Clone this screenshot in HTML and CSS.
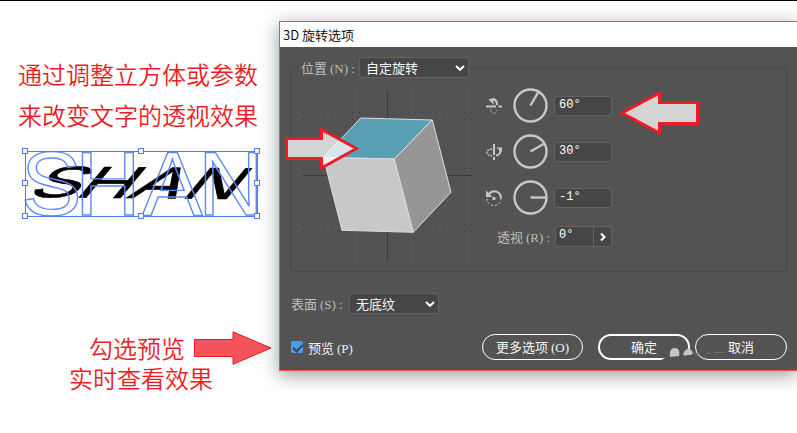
FILE: index.html
```html
<!DOCTYPE html>
<html lang="zh-Hans">

<head>
    <meta charset="utf-8">
    <meta name="viewport" content="width=device-width, initial-scale=1.0">
    <title>3D 旋转选项</title>
    <link rel="stylesheet" href="styles.css">
</head>

<body>
    <div class="page">
        <section class="notes">
            <p class="note">通过调整立方体或参数<br>来改变文字的透视效果</p>

            <svg class="artwork" width="242" height="76" viewBox="0 0 242 76">
                <text class="solid" transform="matrix(1 0.01 -0.5 0.6 0 52)" x="6 53 106 159" y="0">SHAN</text>
                <text class="outline" x="1 55 122 178" y="70" stroke-width="1.4">SHAN</text>
                <rect class="bounds" x="5.5" y="6.5" width="232" height="65" />
                <g class="handles">
                    <rect x="2.5" y="3.5" width="5" height="5" />
                    <rect x="118.5" y="3.5" width="5" height="5" />
                    <rect x="234.5" y="3.5" width="5" height="5" />
                    <rect x="2.5" y="35.5" width="5" height="5" />
                    <rect x="234.5" y="35.5" width="5" height="5" />
                    <rect x="2.5" y="68.5" width="5" height="5" />
                    <rect x="118.5" y="68.5" width="5" height="5" />
                    <rect x="234.5" y="68.5" width="5" height="5" />
                </g>
            </svg>

            <div class="hint">
                <span>勾选预览</span>
                <svg width="78" height="34" viewBox="0 0 78 34">
                    <path class="arrow-red" d="M.5 8.5H39V.8L77 17 39 33.3V25.5H.5Z" />
                </svg>
            </div>
            <div class="hint hint-second">实时查看效果</div>
        </section>

        <form class="dialog">
            <h1 class="title">3D 旋转选项</h1>
            <div class="content">
                <fieldset class="position">
                    <legend>
                        <label for="position">位置 <span class="key">(N) :</span></label>
                        <span class="select select-wide">
                            <select id="position">
                                <option>自定旋转</option>
                            </select>
                            <svg class="chevron" width="10" height="6" viewBox="0 0 10 6"><path d="M1 1 5 4.8 9 1" /></svg>
                        </span>
                    </legend>

                    <div class="stage">
                        <svg width="170" height="170" viewBox="0 0 170 170">
                            <defs>
                                <pattern id="dots" width="7" height="7" patternUnits="userSpaceOnUse">
                                    <rect width="1" height="1" fill="#3d3d3d" />
                                </pattern>
                            </defs>
                            <rect width="170" height="170" fill="url(#dots)" />
                            <path d="M84.5 0V170M0 84.5H170" stroke="#3a3a3a" />
                            <g stroke="#dedede" stroke-linejoin="round">
                                <path d="M57.7 27 129.3 29 91.3 68 20.3 66.5Z" fill="#5aa0b5" />
                                <path d="M20.3 66.5 91.3 68 110.3 141.3 39 139.3Z" fill="#c8c8c8" />
                                <path d="M129.3 29 148 101.3 110.3 141.3 91.3 68Z" fill="#969696" />
                            </g>
                        </svg>
                        <svg class="arrow-cube" width="74" height="44" viewBox="0 0 74 44">
                            <path class="arrow" d="M1.5 11.5H36.5V2.5L71.5 21.5 36.5 41V31.5H1.5Z" />
                        </svg>
                    </div>

                    <div class="controls">
                        <div class="axis">
                            <svg class="icon" width="18" height="18" viewBox="0 0 18 18">
                                <path d="M1 9.5H11M13.5 9.5H17" stroke-width="2" />
                                <path d="M7 3C10 1 12 4 12 8" stroke-width="2" />
                                <path class="fill" d="M3.5 2.5 8.5 1V7.5Z" />
                                <path d="M5.5 12C6 17.5 11 18.5 12.5 12" stroke-dasharray="1 1" />
                            </svg>
                            <svg class="dial" width="35" height="35" viewBox="0 0 35 35" stroke-width="2.4">
                                <circle cx="17.5" cy="17.5" r="16" />
                                <path d="M17.5 17.5 25.3 4" />
                            </svg>
                            <input type="text" class="angle" aria-label="X 轴" value="60°">
                        </div>
                        <div class="axis">
                            <svg class="icon" width="18" height="18" viewBox="0 0 18 18">
                                <path d="M9 1V12M9 14V17" stroke-width="2" />
                                <path d="M11 12.5C15 12 16 9.5 15 6" stroke-width="2" />
                                <path class="fill" d="M11.5 4.5H17V9Z" />
                                <path d="M7 6C0 7 0 12 7 13" stroke-width="1.4" stroke-dasharray="2 1" />
                            </svg>
                            <svg class="dial" width="35" height="35" viewBox="0 0 35 35" stroke-width="2.4">
                                <circle cx="17.5" cy="17.5" r="16" />
                                <path d="M17.5 17.5 31.5 9.5" />
                            </svg>
                            <input type="text" class="angle" aria-label="Y 轴" value="30°">
                        </div>
                        <div class="axis">
                            <svg class="icon" width="18" height="18" viewBox="0 0 18 18">
                                <path d="M3.5 5.5C8-.5 16 2.5 16 9.5" stroke-width="2" />
                                <path class="fill" d="M1 1.5V8H7.5Z" />
                                <path d="M16 9.5C16 19 2 19 2 9.5" stroke-dasharray="2 2" />
                                <circle class="fill" cx="9" cy="9.5" r="1.7" />
                            </svg>
                            <svg class="dial" width="35" height="35" viewBox="0 0 35 35" stroke-width="2.4">
                                <circle cx="17.5" cy="17.5" r="16" />
                                <path d="M17.5 17.5H33.5" />
                            </svg>
                            <input type="text" class="angle" aria-label="Z 轴" value="-1°">
                        </div>
                        <div class="perspective">
                            <label for="perspective">透视 <span class="key">(R) :</span></label>
                            <div class="stepper">
                                <input type="text" class="angle" id="perspective" value="0°">
                                <button type="button" class="step" aria-label="展开">
                                    <svg width="6" height="10" viewBox="0 0 6 10"><path d="M1 1.5 4.5 5 1 8.5" /></svg>
                                </button>
                            </div>
                        </div>
                        <svg class="arrow-angle" width="80" height="44" viewBox="0 0 80 44">
                            <path class="arrow" d="M2 22 39.5 2V11.5H77.5V32.5H39.5V42Z" />
                        </svg>
                    </div>
                </fieldset>

                <div class="surface">
                    <label for="surface">表面 <span class="key">(S) :</span></label>
                    <span class="select">
                        <select id="surface">
                            <option>无底纹</option>
                        </select>
                        <svg class="chevron" width="10" height="6" viewBox="0 0 10 6"><path d="M1 1 5 4.8 9 1" /></svg>
                    </span>
                </div>

                <div class="footer">
                    <input type="checkbox" id="preview" checked>
                    <label for="preview">预览 <span class="key">(P)</span></label>
                    <button type="button" class="btn btn-more">更多选项 <span class="key">(O)</span></button>
                    <button type="submit" class="btn btn-ok">确定</button>
                    <button type="button" class="btn">取消</button>
                    <svg class="smudge" width="70" height="14" viewBox="0 0 70 14">
                        <path d="M2 14 8 11 31 9 27 14Z" fill="#535353" />
                        <path d="M11 11C10 5 12 2 16 2S21 6 20 10Z" fill="#c4c4c4" />
                        <path d="M24 9C26 1 32 1 34 7L32 9Z" fill="#c4c4c4" />
                        <path d="M34 8 40 7M47 7H52M55 7 65 6" stroke="#777" />
                    </svg>
                </div>
            </div>
        </form>
    </div>
</body>

</html>
```
FILE: styles.css
```css
* {
    box-sizing: border-box;
}

body {
    margin: 0;
    border-top: 1px solid #000;
    background: #fff;
    font-family: "Noto Sans CJK SC", sans-serif;
    overflow-x: hidden;
}

svg {
    display: block;
    flex: none;
}

.page {
    display: flex;
    align-items: flex-start;
}

/* 左侧说明 */
.notes {
    flex: none;
    width: 279px;
    padding-top: 52px;
    color: #ed1c24;
    font-size: 24px;
    font-weight: 350;
}

.note {
    margin: 0 0 10px 18px;
    line-height: 41px;
}

.artwork {
    margin: 0 0 110px 20px;
    overflow: visible;
}

.artwork text {
    font-family: "Liberation Sans", sans-serif;
    font-weight: 400;
}

.solid {
    font-size: 74px;
    fill: #000;
    stroke: #000;
    stroke-width: 1px;
}

.outline {
    font-size: 91px;
    fill: none;
    stroke: #5f8af4;
}

.bounds {
    fill: none;
    stroke: #4a7df0;
}

.handles {
    fill: #fff;
    stroke: #4a7df0;
}

.hint {
    display: flex;
    align-items: center;
    gap: 9px;
    margin-left: 89px;
    line-height: 34px;
}

.hint-second {
    margin-left: 69px;
    line-height: 26px;
}

.arrow-red {
    fill: #f4555c;
    stroke: #ed1c24;
}

.arrow {
    fill: rgba(255, 255, 255, 0.75);
    stroke: #ed1c24;
    stroke-width: 3px;
}

/* 对话框 */
.dialog {
    flex: 1;
    min-width: 518px;
    margin-top: 20px;
    border: 1px solid #ff4a4a;
    border-right: 0;
    background: #535353;
    box-shadow: 0 4px 18px rgba(0, 0, 0, 0.4);
    color: #f0f0f0;
    font-size: 13px;
}

.title {
    margin: 0;
    padding-left: 3px;
    background: #fff;
    color: #000;
    font-size: 13px;
    font-weight: 350;
    line-height: 25px;
}

.content {
    padding: 10px;
}

.key {
    font-family: "Liberation Serif", serif;
    line-height: 1;
}

.position {
    display: flex;
    gap: 12px;
    min-width: 0;
    margin: 0;
    padding: 10px 12px;
    border: 1px solid #484848;
    border-radius: 3px;
}

legend {
    display: flex;
    align-items: center;
    height: 21px;
    margin-left: -5px;
    padding: 0 3px;
}

legend label,
.surface label,
.perspective label {
    color: #bdbdbd;
    line-height: 21px;
    white-space: nowrap;
}

legend label,
.surface label {
    width: 58px;
}

.select {
    position: relative;
    width: 90px;
}

.select-wide {
    width: 110px;
}

select {
    display: block;
    appearance: none;
    width: 100%;
    height: 21px;
    padding: 0 6px;
    border: 1px solid #636363;
    border-radius: 3px;
    background: #464646;
    color: #f5f5f5;
    font: inherit;
    line-height: 19px;
}

.chevron {
    position: absolute;
    top: 8px;
    right: 4px;
    pointer-events: none;
}

.chevron path,
.step path {
    fill: none;
    stroke: #fff;
    stroke-width: 2px;
}

/* 立方体 */
.stage {
    position: relative;
    margin-top: 3px;
}

.arrow-cube {
    position: absolute;
    top: 36px;
    left: -18px;
}

/* 角度 */
.controls {
    position: relative;
    display: flex;
    flex-direction: column;
    gap: 11px;
    width: 127px;
}

.arrow-angle {
    position: absolute;
    top: 3px;
    left: 135px;
}

.axis {
    display: flex;
    align-items: center;
}

.icon {
    margin-right: 10px;
    fill: none;
    stroke: #c8c8c8;
}

.icon .fill {
    fill: #c8c8c8;
    stroke: none;
}

.dial {
    margin-right: 6px;
    fill: none;
    stroke: #c8c8c8;
}

.angle {
    flex: 1;
    min-width: 0;
    height: 20px;
    padding: 0 4px 2px;
    border: 1px solid #636363;
    border-radius: 3px;
    background: #464646;
    color: #fff;
    font-family: "Liberation Mono", monospace;
    font-size: 12px;
}

.perspective {
    display: flex;
    justify-content: space-between;
    height: 21px;
    padding-left: 12px;
}

.stepper {
    display: flex;
    width: 57px;
}

.stepper .angle {
    height: 21px;
    padding: 0 3px 3px;
    border-radius: 3px 0 0 3px;
}

.step {
    display: flex;
    align-items: center;
    justify-content: center;
    width: 18px;
    padding: 0;
    border: 1px solid #636363;
    border-left: 0;
    border-radius: 0 3px 3px 0;
    background: #464646;
}

.surface {
    display: flex;
    height: 21px;
    margin-top: 21px;
    padding-left: 1px;
}

/* 底部按钮 */
.footer {
    position: relative;
    display: flex;
    align-items: center;
    margin-top: 20px;
    padding-left: 1px;
}

#preview {
    appearance: none;
    width: 12px;
    height: 12px;
    margin: 0 5px 0 0;
    border-radius: 2px;
    background: #469cf5;
}

#preview::after {
    content: "";
    display: block;
    width: 4px;
    height: 8px;
    margin: 1px 0 0 4px;
    border: solid #3c4650;
    border-width: 0 2px 2px 0;
    transform: rotate(45deg);
}

.btn {
    width: 92px;
    height: 26px;
    padding: 0;
    border: 1px solid #fff;
    border-radius: 13px;
    background: none;
    color: #f5f5f5;
    font: inherit;
    line-height: 22px;
}

.btn-more {
    width: 101px;
    margin: 0 15px 0 auto;
}

.btn-ok {
    margin-right: 5px;
    border-width: 2px;
}

.smudge {
    position: absolute;
    right: 58px;
    bottom: 0;
}
```
